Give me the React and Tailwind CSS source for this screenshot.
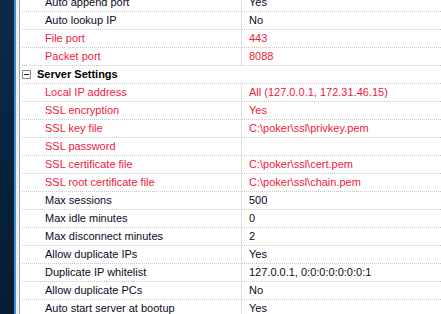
import React from "react";

const rows = [
  { n: "Auto append port", v: "Yes" },
  { n: "Auto lookup IP", v: "No" },
  { n: "File port", v: "443", r: true },
  { n: "Packet port", v: "8088", r: true },
  { cat: "Server Settings" },
  { n: "Local IP address", v: "All (127.0.0.1, 172.31.46.15)", r: true },
  { n: "SSL encryption", v: "Yes", r: true },
  { n: "SSL key file", v: "C:\\poker\\ssl\\privkey.pem", r: true },
  { n: "SSL password", v: "", r: true },
  { n: "SSL certificate file", v: "C:\\poker\\ssl\\cert.pem", r: true },
  { n: "SSL root certificate file", v: "C:\\poker\\ssl\\chain.pem", r: true },
  { n: "Max sessions", v: "500" },
  { n: "Max idle minutes", v: "0" },
  { n: "Max disconnect minutes", v: "2" },
  { n: "Allow duplicate IPs", v: "Yes" },
  { n: "Duplicate IP whitelist", v: "127.0.0.1, 0:0:0:0:0:0:0:1" },
  { n: "Allow duplicate PCs", v: "No" },
  { n: "Auto start server at bootup", v: "Yes" },
];

export default function App() {
  return (
    <div
      className="flex w-[441px] h-[314px] overflow-hidden bg-white text-[11px] leading-none"
      style={{ fontFamily: '"Liberation Sans", Arial, sans-serif' }}
    >
      <div className="w-[14px] shrink-0 bg-gradient-to-b from-[#0c2a48] to-[#061c33]" />
      <div className="w-[2px] shrink-0 bg-[#3d8fd6]" />
      <div className="w-[3px] shrink-0 bg-[#f0f0f0]" />
      <div className="w-[1px] shrink-0 bg-[#a0a0a0]" />
      <div className="flex-1 pl-[2px] flex flex-col -mt-[6px]">
        {rows.map((row, i) =>
          row.cat ? (
            <div
              key={i}
              className="h-[18px] shrink-0 flex items-center border-b border-dotted border-[#c8c8c8]"
            >
              <div className="w-[9px] h-[9px] border border-[#8c8c8c] bg-white flex items-center justify-center">
                <div className="w-[5px] h-[1px] bg-[#202020]" />
              </div>
              <span className="ml-[6px] font-bold text-black">{row.cat}</span>
            </div>
          ) : (
            <div
              key={i}
              className="h-[18px] shrink-0 flex border-b border-dotted border-[#c8c8c8]"
            >
              <div
                className={`w-[219px] shrink-0 pl-[23px] flex items-center ${
                  row.r ? "text-[#f0203c]" : "text-[#0a0a1e]"
                }`}
              >
                {row.n}
              </div>
              <div
                className={`flex-1 border-l border-[#e0e0e0] pl-[7px] flex items-center ${
                  row.r ? "text-[#f0203c]" : "text-[#0a0a1e]"
                }`}
              >
                {row.v}
              </div>
            </div>
          )
        )}
      </div>
    </div>
  );
}
